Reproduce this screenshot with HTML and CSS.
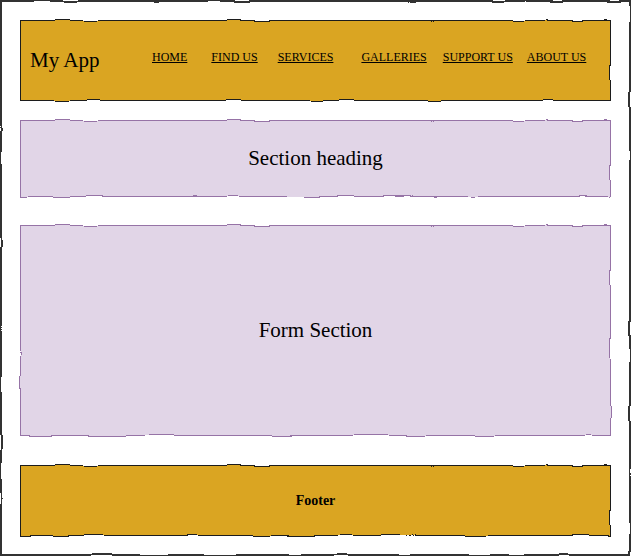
FILE: index.html
```html
<!DOCTYPE html>
<html>
<head>
<meta charset="utf-8">
<link rel="stylesheet" href="styles.css">
</head>
<body>
<svg class="defs" width="0" height="0" aria-hidden="true">
  <filter id="rough" x="-2%" y="-5%" width="104%" height="110%">
    <feTurbulence type="fractalNoise" baseFrequency="0.035" numOctaves="1" seed="5" result="n"/>
    <feDisplacementMap in="SourceGraphic" in2="n" scale="3.5" xChannelSelector="R" yChannelSelector="G"/>
  </filter>
</svg>
<div class="frame">
  <header class="box gold header">
    <div class="brand">My App</div>
    <nav class="nav">
      <a href="#">HOME</a>
      <a href="#">FIND US</a>
      <a href="#">SERVICES</a>
      <a href="#">GALLERIES</a>
      <a href="#">SUPPORT US</a>
      <a href="#">ABOUT US</a>
    </nav>
  </header>
  <section class="box purple heading">Section heading</section>
  <section class="box purple form">Form Section</section>
  <footer class="box gold footer">Footer</footer>
</div>
</body>
</html>
```
FILE: styles.css
```css
html, body {
  margin: 0;
  padding: 0;
  background: #fff;
}
.defs {
  position: absolute;
}
.frame {
  position: relative;
  width: 631px;
  height: 556px;
  box-sizing: border-box;
  padding: 20px 20px 20px 20px;
  display: flex;
  flex-direction: column;
  font-family: "Liberation Serif", "Times New Roman", serif;
  color: #000;
}
.frame::before {
  content: "";
  position: absolute;
  inset: 0;
  border: 2px solid #333;
  filter: url(#rough);
  pointer-events: none;
}
.box {
  position: relative;
  z-index: 0;
  box-sizing: border-box;
  width: 591px;
  display: flex;
  align-items: center;
}
.box::before {
  content: "";
  position: absolute;
  inset: 0;
  z-index: -1;
  filter: url(#rough);
}
.gold::before {
  background: #daa520;
  border: 1.2px solid #1a1a1a;
}
.purple::before {
  background: #e1d5e7;
  border: 1.2px solid #9673a6;
}
.header {
  height: 81px;
}
.brand {
  font-size: 21px;
  margin-left: 10px;
  width: 122px;
}
.nav {
  display: flex;
  align-items: center;
  margin-top: -6px;
}
.nav a {
  color: #000;
  font-size: 12px;
  text-decoration: underline;
}
.nav a:nth-child(2) { margin-left: 24px; }
.nav a:nth-child(3) { margin-left: 20px; }
.nav a:nth-child(4) { margin-left: 28px; }
.nav a:nth-child(5) { margin-left: 16px; }
.nav a:nth-child(6) { margin-left: 14px; }
.heading {
  margin-top: 19px;
  height: 77px;
  justify-content: center;
  font-size: 21px;
}
.form {
  margin-top: 28px;
  height: 212px;
  justify-content: center;
  font-size: 21px;
}
.footer {
  margin-top: 29px;
  height: 71px;
  justify-content: center;
  font-size: 14px;
  font-weight: bold;
}
```
